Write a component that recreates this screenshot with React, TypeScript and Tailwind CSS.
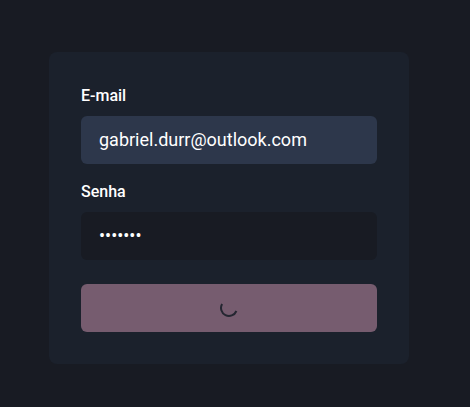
export default function App() {
  return (
    <main className="flex h-[407px] w-[470px] items-start bg-[#181b23] pt-[52px] pl-[49px] font-['Roboto',sans-serif] text-white">
      <form className="flex w-[360px] flex-col rounded-lg bg-[#1b212c] p-8">
        <label className="mb-2 h-6 text-base leading-6 font-medium">E-mail</label>
        <div className="flex h-12 items-center rounded-md bg-[#2d374b] px-[18px] text-lg">gabriel.durr@outlook.com</div>
        <label className="mt-4 mb-2 h-6 text-base leading-6 font-medium">Senha</label>
        <div className="flex h-12 items-center rounded-md bg-[#181b23] px-[18px] text-lg">•••••••</div>
        <button type="button" aria-label="Loading" className="mt-6 flex h-12 items-center justify-center rounded-md bg-[#765c6f]">
          <svg width="18" height="18" viewBox="0 0 18 18" fill="none" stroke="#242631" strokeWidth="2">
            <path d="M2.1 4.9A8 8 0 1 0 16.4 12" />
          </svg>
        </button>
      </form>
    </main>
  );
}
